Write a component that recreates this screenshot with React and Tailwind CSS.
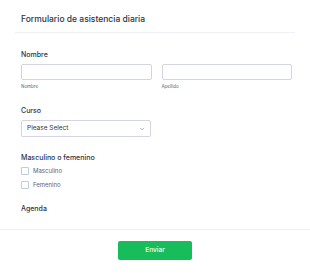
import { ChevronDown } from 'lucide-react';

function Check({ label }) {
  return (
    <label className="flex items-center gap-[4px] h-[8px]">
      <span className="w-[8px] h-[8px] border border-[#c3cad8] rounded-[1px] bg-white" />
      <span className="text-[6px] text-[#57647e] leading-none">{label}</span>
    </label>
  );
}

export default function App() {
  return (
    <div className="w-[310px] h-[277px] bg-white font-['Inter',sans-serif] text-[#2c3345] overflow-hidden">
      <div className="px-[15px]">
        <div className="h-[33px] border-b border-[#f0f1f6] flex items-center pl-[6px] pt-[6px]">
          <h1 className="text-[8.5px] font-medium leading-none">Formulario de asistencia diaria</h1>
        </div>
        <div className="pl-[6px] pr-[3px]">
          <div className="mt-[18px] text-[7px] font-medium leading-[8px]">Nombre</div>
          <div className="mt-[5px] grid grid-cols-2 gap-[10px]">
            <div>
              <div className="h-[16px] border border-[#d3d6e0] rounded-[2px]" />
              <div className="mt-[4px] text-[4.5px] text-[#57647e] leading-[6px]">Nombre</div>
            </div>
            <div>
              <div className="h-[16px] border border-[#d3d6e0] rounded-[2px]" />
              <div className="mt-[4px] text-[4.5px] text-[#57647e] leading-[6px]">Apellido</div>
            </div>
          </div>
          <div className="mt-[17px] text-[7px] font-medium leading-[8px]">Curso</div>
          <div className="mt-[5px] w-[130px] h-[17px] border border-[#d3d6e0] rounded-[2px] flex items-center justify-between px-[5px]">
            <span className="text-[6.5px] text-[#2c3345] leading-none">Please Select</span>
            <ChevronDown className="w-[6px] h-[6px] text-[#8d94a8]" strokeWidth={3} />
          </div>
          <div className="mt-[17px] text-[7px] font-medium leading-[8px]">Masculino o femenino</div>
          <div className="mt-[5px] flex flex-col gap-[6px]">
            <Check label="Masculino" />
            <Check label="Femenino" />
          </div>
          <div className="mt-[16px] text-[7px] font-medium leading-[8px]">Agenda</div>
        </div>
      </div>
      <div className="mt-[16px] border-t border-[#f0f1f6] flex justify-center pt-[11px]">
        <button className="w-[74px] h-[19px] rounded-[2px] bg-[#18bd5b] text-white text-[6.5px] font-medium">
          Enviar
        </button>
      </div>
    </div>
  );
}
